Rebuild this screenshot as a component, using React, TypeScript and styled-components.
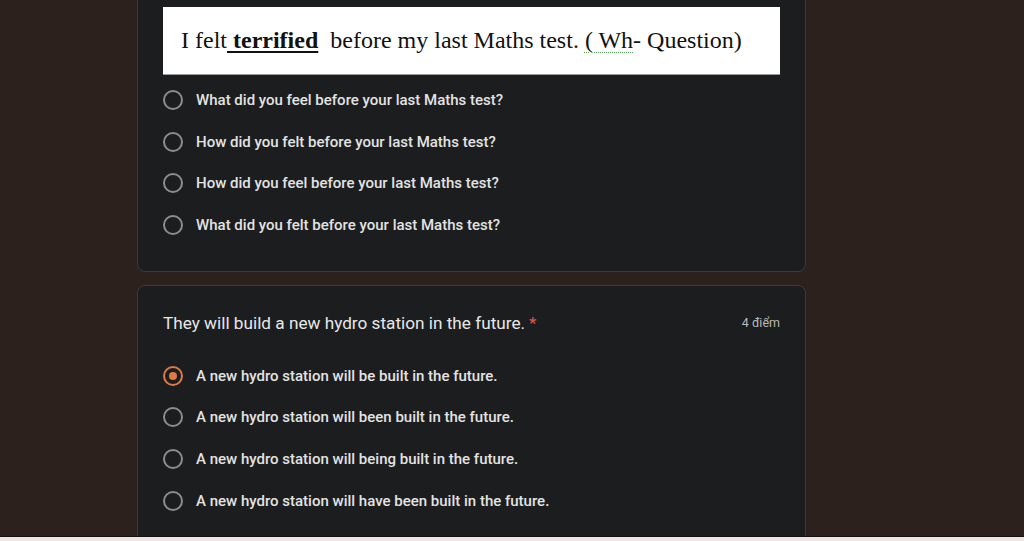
import React from "react";
import styled, { createGlobalStyle } from "styled-components";

const Global = createGlobalStyle`
  html, body { margin: 0; padding: 0; }
  body {
    background: #2d211d;
    width: 1024px;
    height: 541px;
    overflow: hidden;
    font-family: Roboto, "Noto Sans", Arial, sans-serif;
  }
`;

const Screen = styled.div`
  height: 541px;
  display: flex;
  flex-direction: column;
  overflow: hidden;
`;

const Column = styled.div`
  flex: 1;
  width: 669px;
  margin-left: 137px;
  margin-top: -12px;
  display: flex;
  flex-direction: column;
  gap: 13px;
  overflow: hidden;
`;

const Card = styled.section<{ $pad: string }>`
  background: #1c1d1f;
  border: 1px solid #3b3b3c;
  border-radius: 8px;
  padding: ${(p) => p.$pad};
  flex-shrink: 0;
`;

const Picture = styled.div`
  background: #ffffff;
  height: 67px;
  display: flex;
  align-items: center;
  padding-left: 18px;
  font-family: "Liberation Serif", "Times New Roman", serif;
  font-size: 24px;
  color: #111;
  white-space: nowrap;
  border-bottom: 1px solid #9a9a9a;
`;

const Bold = styled.span`
  font-weight: 700;
  text-decoration: underline;
  text-decoration-thickness: 2px;
  text-underline-offset: 3px;
`;

const Wavy = styled.span`
  text-decoration: underline dotted #5aa85e;
  text-decoration-thickness: 1px;
  text-underline-offset: 4px;
`;

const Options = styled.div<{ $top?: number }>`
  display: flex;
  flex-direction: column;
  margin-top: ${(p) => p.$top ?? 0}px;
`;

const Option = styled.label`
  display: flex;
  align-items: center;
  height: 41.7px;
  gap: 13px;
  color: #e3e3e3;
  font-size: 15px;
  font-weight: 500;
  cursor: pointer;
`;

const Radio = styled.span<{ $on?: boolean }>`
  width: 16px;
  height: 16px;
  border-radius: 50%;
  border: 2px solid ${(p) => (p.$on ? "#e07a45" : "#8d8d8d")};
  display: flex;
  align-items: center;
  justify-content: center;
  flex-shrink: 0;
  &::after {
    content: "";
    width: 8px;
    height: 8px;
    border-radius: 50%;
    background: #e07a45;
    display: ${(p) => (p.$on ? "block" : "none")};
  }
`;

const Header = styled.div`
  display: flex;
  justify-content: space-between;
  align-items: center;
  margin-bottom: 22px;
`;

const Title = styled.h2`
  margin: 0;
  font-size: 17.2px;
  font-weight: 400;
  color: #e8e8e8;
`;

const Star = styled.span`
  color: #e2574c;
  margin-left: 4px;
`;

const Points = styled.span`
  font-size: 12.5px;
  color: #b9b9b9;
`;

const Footer = styled.div`
  height: 4px;
  border-top: 1px solid #111;
  background: #efe5e4;
  flex-shrink: 0;
`;

const q1 = [
  "What did you feel before your last Maths test?",
  "How did you felt before your last Maths test?",
  "How did you feel before your last Maths test?",
  "What did you felt before your last Maths test?",
];

const q2 = [
  "A new hydro station will be built in the future.",
  "A new hydro station will been built in the future.",
  "A new hydro station will being built in the future.",
  "A new hydro station will have been built in the future.",
];

export default function App() {
  return (
    <Screen>
      <Global />
      <Column>
        <Card $pad="18px 25px 25px 25px">
          <Picture>
            I felt<Bold>&nbsp;terrified</Bold>&nbsp; before my last Maths test.&nbsp;<Wavy>( Wh</Wavy>- Question)
          </Picture>
          <Options $top={4}>
            {q1.map((t) => (
              <Option key={t}>
                <Radio />
                {t}
              </Option>
            ))}
          </Options>
        </Card>
        <Card $pad="27px 25px 20px 25px">
          <Header>
            <Title>
              They will build a new hydro station in the future.<Star>*</Star>
            </Title>
            <Points>4 điểm</Points>
          </Header>
          <Options>
            {q2.map((t, i) => (
              <Option key={t}>
                <Radio $on={i === 0} />
                {t}
              </Option>
            ))}
          </Options>
        </Card>
      </Column>
      <Footer />
    </Screen>
  );
}
